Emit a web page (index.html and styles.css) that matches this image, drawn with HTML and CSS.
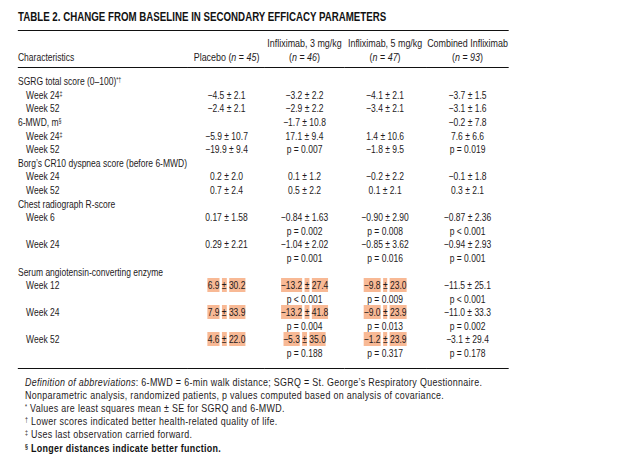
FILE: index.html
```html
<!DOCTYPE html>
<html>
<head>
<meta charset="utf-8">
<link rel="stylesheet" href="styles.css">
</head>
<body>
<div class="page">
  <h1 class="title">TABLE 2. CHANGE FROM BASELINE IN SECONDARY EFFICACY PARAMETERS</h1>
  <table class="tbl">
    <colgroup>
      <col class="c0"><col class="c1"><col class="c2"><col class="c3"><col class="c4">
    </colgroup>
    <thead>
      <tr>
        <th class="lbl">Characteristics</th>
        <th>Placebo (<i>n</i> = <i>45</i>)</th>
        <th>Infliximab, 3 mg/kg<br>(<i>n</i> = <i>46</i>)</th>
        <th>Infliximab, 5 mg/kg<br>(<i>n</i> = <i>47</i>)</th>
        <th>Combined Infliximab<br>(<i>n</i> = <i>93</i>)</th>
      </tr>
    </thead>
    <tbody>
      <tr class="first"><td class="cat">SGRG total score (0–100)<sup>*†</sup></td><td></td><td></td><td></td><td></td></tr>
      <tr><td class="wk">Week 24<sup>‡</sup></td><td>−4.5 ± 2.1</td><td>−3.2 ± 2.2</td><td>−4.1 ± 2.1</td><td>−3.7 ± 1.5</td></tr>
      <tr><td class="wk">Week 52</td><td>−2.4 ± 2.1</td><td>−2.9 ± 2.2</td><td>−3.4 ± 2.1</td><td>−3.1 ± 1.6</td></tr>
      <tr><td class="cat">6-MWD, m<sup>§</sup></td><td></td><td>−1.7 ± 10.8</td><td></td><td>−0.2 ± 7.8</td></tr>
      <tr><td class="wk">Week 24<sup>‡</sup></td><td>−5.9 ± 10.7</td><td>17.1 ± 9.4</td><td>1.4 ± 10.6</td><td>7.6 ± 6.6</td></tr>
      <tr><td class="wk">Week 52</td><td>−19.9 ± 9.4</td><td>p = 0.007</td><td>−1.8 ± 9.5</td><td>p = 0.019</td></tr>
      <tr><td class="cat">Borg’s CR10 dyspnea score (before 6-MWD)</td><td></td><td></td><td></td><td></td></tr>
      <tr><td class="wk">Week 24</td><td>0.2 ± 2.0</td><td>0.1 ± 1.2</td><td>−0.2 ± 2.2</td><td>−0.1 ± 1.8</td></tr>
      <tr><td class="wk">Week 52</td><td>0.7 ± 2.4</td><td>0.5 ± 2.2</td><td>0.1 ± 2.1</td><td>0.3 ± 2.1</td></tr>
      <tr><td class="cat">Chest radiograph R-score</td><td></td><td></td><td></td><td></td></tr>
      <tr><td class="wk">Week 6</td><td>0.17 ± 1.58</td><td>−0.84 ± 1.63<br>p = 0.002</td><td>−0.90 ± 2.90<br>p = 0.008</td><td>−0.87 ± 2.36<br>p &lt; 0.001</td></tr>
      <tr><td class="wk">Week 24</td><td>0.29 ± 2.21</td><td>−1.04 ± 2.02<br>p = 0.001</td><td>−0.85 ± 3.62<br>p = 0.016</td><td>−0.94 ± 2.93<br>p = 0.001</td></tr>
      <tr><td class="cat">Serum angiotensin-converting enzyme</td><td></td><td></td><td></td><td></td></tr>
      <tr><td class="wk">Week 12</td><td><span class="hl">6.9</span> <span class="hl">±</span> <span class="hl">30.2</span></td><td><span class="hl">−13.2</span> <span class="hl">±</span> <span class="hl">27.4</span><br>p &lt; 0.001</td><td><span class="hl">−9.8</span> <span class="hl">±</span> <span class="hl">23.0</span><br>p = 0.009</td><td>−11.5 ± 25.1<br>p &lt; 0.001</td></tr>
      <tr><td class="wk">Week 24</td><td><span class="hl">7.9</span> <span class="hl">±</span> <span class="hl">33.9</span></td><td><span class="hl">−13.2</span> <span class="hl">±</span> <span class="hl">41.8</span><br>p = 0.004</td><td><span class="hl">−9.0</span> <span class="hl">±</span> <span class="hl">23.9</span><br>p = 0.013</td><td>−11.0 ± 33.3<br>p = 0.002</td></tr>
      <tr class="last"><td class="wk">Week 52</td><td><span class="hl">4.6</span> <span class="hl">±</span> <span class="hl">22.0</span></td><td><span class="hl">−5.3</span> <span class="hl">±</span> <span class="hl">35.0</span><br>p = 0.188</td><td><span class="hl">−1.2</span> <span class="hl">±</span> <span class="hl">23.9</span><br>p = 0.317</td><td>−3.1 ± 29.4<br>p = 0.178</td></tr>
    </tbody>
  </table>
  <div class="notes">
    <p><i>Definition of abbreviations</i>: 6-MWD = 6-min walk distance; SGRQ = St. George’s Respiratory Questionnaire.</p>
    <p>Nonparametric analysis, randomized patients, p values computed based on analysis of covariance.</p>
    <p><sup>*</sup> Values are least squares mean ± SE for SGRQ and 6-MWD.</p>
    <p><sup>†</sup> Lower scores indicated better health-related quality of life.</p>
    <p><sup>‡</sup> Uses last observation carried forward.</p>
    <p class="strong"><sup>§</sup> Longer distances indicate better function.</p>
  </div>
</div>
</body>
</html>
```

FILE: styles.css
```css
html, body {
  margin: 0;
  padding: 0;
  background: #ffffff;
}

/* The source uses a condensed sans; emulate it by narrowing Liberation Sans.
   Horizontal sizes below are pre-scale (target px / 0.81). */
.page {
  width: 606px;
  padding: 9px 0 0 22.2px;
  font-family: "Liberation Sans", Arial, sans-serif;
  font-size: 10.5px;
  color: #1e1a1b;
  transform: scaleX(0.81);
  transform-origin: 0 0;
}

.title {
  margin: 0;
  font-size: 12px;
  font-weight: bold;
  letter-spacing: 0;
  line-height: 16px;
  color: #111;
  padding-bottom: 5px;
  border-bottom: 1px solid #111;
}

.tbl {
  width: 606px;
  border-collapse: collapse;
  table-layout: fixed;
  line-height: 13.6px;
}

.c0 { width: 210px; }
.c1 { width: 95px; }
.c2 { width: 97.5px; }
.c3 { width: 101.5px; }
.c4 { width: 102px; }

.tbl th {
  font-weight: normal;
  font-size: 11px;
  text-align: center;
  vertical-align: bottom;
  padding: 6px 0 3px;
  white-space: nowrap;
  border-bottom: 1px solid #111;
}

.tbl th.lbl {
  text-align: left;
  font-size: 10.5px;
}

.tbl td {
  padding: 0;
  text-align: center;
  vertical-align: top;
  white-space: nowrap;
}

.tbl td.cat {
  text-align: left;
}

.tbl td.wk {
  text-align: left;
  padding-left: 10px;
}

.tbl tr.first td {
  padding-top: 7px;
}

.tbl tr.last td {
  padding-bottom: 7px;
  border-bottom: 1px solid #111;
}

.tbl tr.last td.wk {
  padding-left: 10px;
}

sup {
  font-size: 6.5px;
  line-height: 0;
  vertical-align: 3px;
}

.hl {
  background: #f8b995;
  padding: 1px 0;
}

.notes {
  padding: 7px 0 0 8.6px;
  line-height: 13.2px;
  font-size: 11px;
  letter-spacing: 0.38px;
}

.notes p {
  margin: 0;
  white-space: nowrap;
}

.notes .strong {
  font-weight: bold;
  color: #111;
}
```
